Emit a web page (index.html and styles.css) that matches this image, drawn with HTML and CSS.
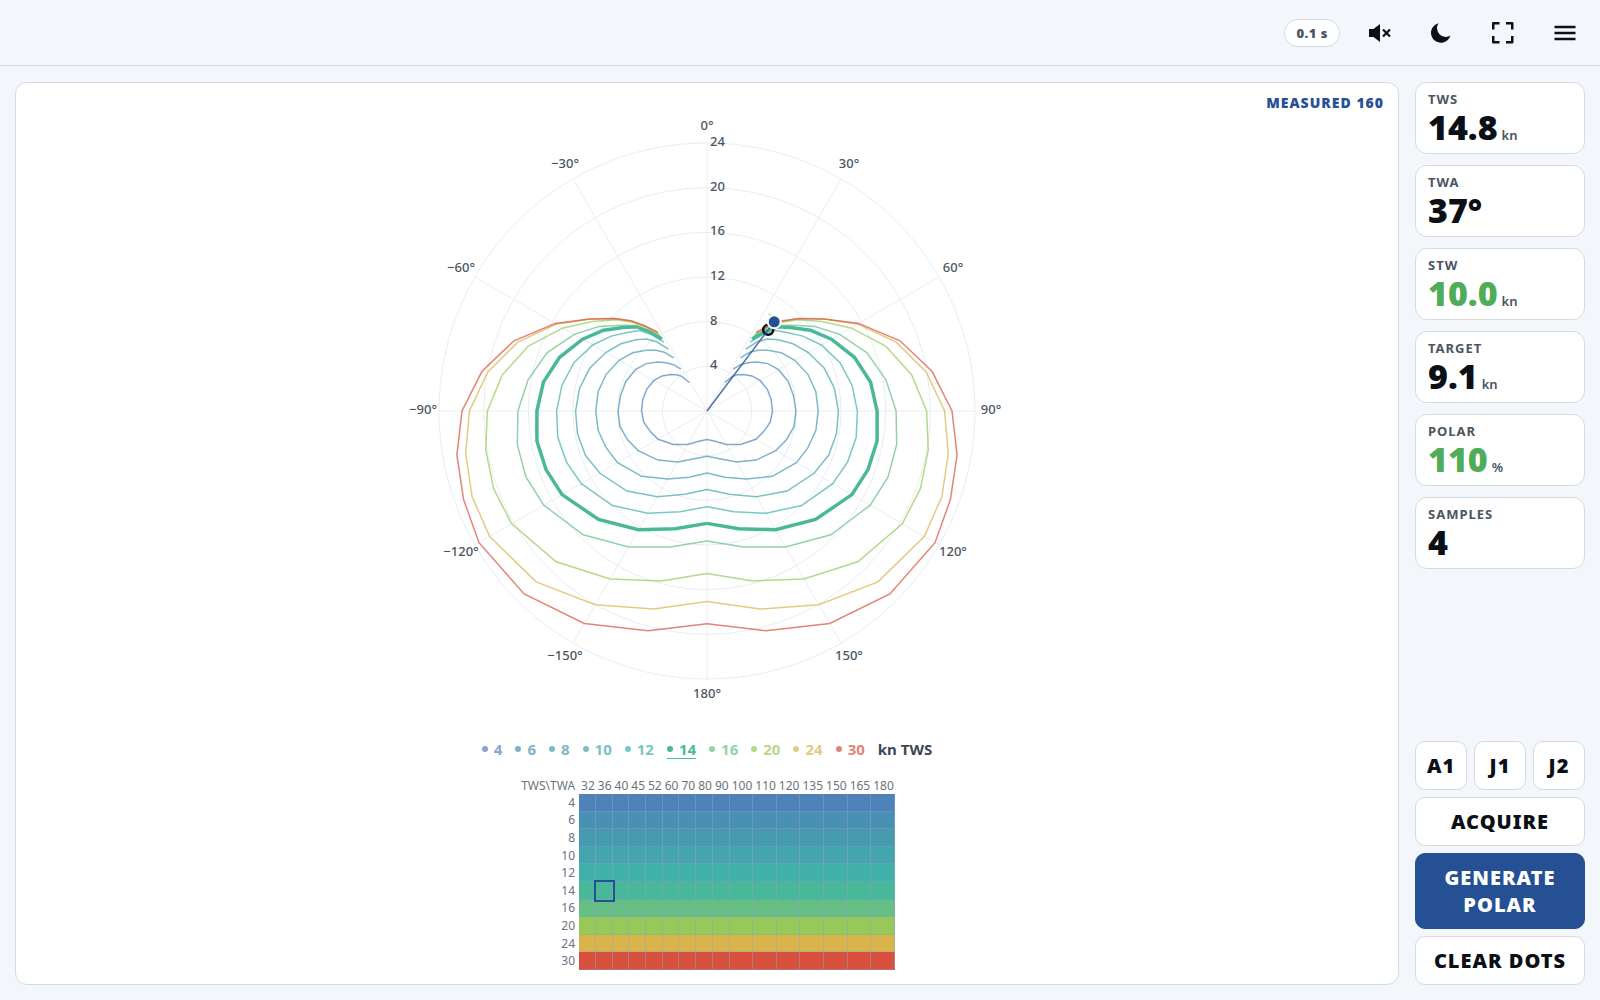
FILE: index.html
```
<!DOCTYPE html>
<html lang="en">
	<head>
		<meta charset="utf-8">
		<title>Polar</title>
		<link rel="stylesheet" href="styles.css">
	</head>
	<body>
		<header class="topbar">
			<span class="rate">0.1 s</span>
			<button class="icon-btn" type="button" aria-label="Sound off">
				<svg width="24" height="24" viewBox="0 0 24 24">
					<path fill="currentColor" d="M2 8h4.500l6.500-5v18l-6.500-5H2z"/>
					<path fill="none" stroke="currentColor" stroke-width="2.200" d="M16 8.500l7 7M23 8.500l-7 7"/>
				</svg>
			</button>
			<button class="icon-btn" type="button" aria-label="Night mode">
				<svg width="24" height="24" viewBox="0 0 24 24">
					<path fill="currentColor" d="M9.500 2.200A9.900 9.900 0 1 0 21.400 14.600A8.800 8.800 0 0 1 9.500 2.200z"/>
				</svg>
			</button>
			<button class="icon-btn" type="button" aria-label="Fullscreen">
				<svg width="24" height="24" viewBox="0 0 24 24">
					<path fill="none" stroke="currentColor" stroke-width="2.500" stroke-linejoin="round" d="M8.500 2.250H2.250V8.500M15 2.250h6.250V8.500M8.500 21.250H2.250V15M15 21.250h6.250V15"/>
				</svg>
			</button>
			<button class="icon-btn" type="button" aria-label="Menu">
				<svg width="24" height="24" viewBox="0 0 24 24">
					<path fill="none" stroke="currentColor" stroke-width="2.500" d="M1.500 6h21M1.500 12h21M1.500 18h21"/>
				</svg>
			</button>
		</header>

		<div class="layout">
			<main class="panel">
				<div class="measured">MEASURED 160</div>
				<svg class="polar" viewBox="-313 -313 626 626"></svg>
				<div class="legend"></div>
				<table class="heat">
					<thead><tr><th class="corner">TWS\TWA</th></tr></thead>
					<tbody></tbody>
				</table>
			</main>

			<aside class="side">
				<div class="stats">
					<div class="stat"><div class="label">TWS</div><div class="value">14.8<span class="unit">kn</span></div></div>
					<div class="stat"><div class="label">TWA</div><div class="value">37°</div></div>
					<div class="stat"><div class="label">STW</div><div class="value good">10.0<span class="unit">kn</span></div></div>
					<div class="stat"><div class="label">TARGET</div><div class="value">9.1<span class="unit">kn</span></div></div>
					<div class="stat"><div class="label">POLAR</div><div class="value good">110<span class="unit">%</span></div></div>
					<div class="stat"><div class="label">SAMPLES</div><div class="value">4</div></div>
				</div>
				<div class="actions">
					<div class="sails">
						<button class="btn" type="button">A1</button>
						<button class="btn" type="button">J1</button>
						<button class="btn" type="button">J2</button>
					</div>
					<button class="btn" type="button">ACQUIRE</button>
					<button class="btn primary" type="button">GENERATE POLAR</button>
					<button class="btn" type="button">CLEAR DOTS</button>
				</div>
			</aside>
		</div>

		<script src="polar.js"></script>
	</body>
</html>
```
FILE: styles.css
```
*{
	box-sizing: border-box;
	margin: 0;
	padding: 0;
}
body{
	display: flex;
	flex-direction: column;
	min-height: 100vh;
	background: #f3f6fa;
	color: #0b1016;
	font-family: "Noto Sans", "Open Sans", sans-serif;
}
button{
	font-family: inherit;
	color: inherit;
	cursor: pointer;
}

/* top bar */
.topbar{
	display: flex;
	align-items: center;
	justify-content: flex-end;
	gap: 16px;
	height: 66px;
	padding: 0 12px;
	border-bottom: 1px solid #d5dae2;
}
.rate{
	padding: 3px 11px;
	border: 1px solid #d5dae2;
	border-radius: 14px;
	background: #fff;
	color: #4a5563;
	font-size: 13px;
	font-weight: 900;
	line-height: 20px;
	letter-spacing: 0.5px;
}
.icon-btn{
	display: flex;
	align-items: center;
	justify-content: center;
	width: 46px;
	height: 46px;
	border: 0;
	background: none;
}

/* page */
.layout{
	flex: 1;
	display: grid;
	grid-template-columns: 1fr 170px;
	gap: 16px;
	padding: 16px 15px 15px;
}
.panel{
	position: relative;
	display: flex;
	flex-direction: column;
	align-items: center;
	padding: 15px 15px 0;
	border: 1px solid #d3dae4;
	border-radius: 12px;
	background: #fff;
}
.measured{
	position: absolute;
	top: 10px;
	right: 14px;
	color: #265094;
	font-size: 14px;
	font-weight: 900;
	line-height: 20px;
	letter-spacing: 1px;
}

/* polar chart */
.polar{
	width: 100%;
	height: 626px;
}
.grid{
	fill: none;
	stroke: #e9edf1;
	stroke-width: 1;
}
.tick{
	fill: #4a5563;
	font-size: 13px;
	font-weight: 500;
}
.curve{
	fill: none;
	stroke-width: 1.5;
	opacity: 0.7;
}
.curve.act{
	stroke-width: 3.5;
	opacity: 1;
}
.sample{
	fill: #9ed8c4;
}
.target{
	fill: none;
	stroke: #0b1016;
	stroke-width: 2.5;
}
.vector{
	stroke: #265094;
	stroke-width: 1.5;
	opacity: 0.8;
}
.live{
	fill: #265094;
	stroke: #fff;
	stroke-width: 2;
}

/* legend */
.legend{
	display: flex;
	gap: 13px;
	margin-top: 15px;
	font-size: 15px;
	font-weight: 700;
	line-height: 20px;
}
.legend span{
	display: flex;
	align-items: center;
	gap: 6px;
	height: 18px;
	margin-top: 1px;
	opacity: 0.7;
}
.legend span::before{
	content: "";
	width: 6px;
	height: 6px;
	border-radius: 50%;
	background: currentColor;
}
.legend span.act{
	box-shadow: 0 1px 0 currentColor;
	opacity: 1;
}
.legend b{
	color: #3c4757;
	font-weight: 700;
}

/* heat table */
.heat{
	height: 192px;
	margin-top: 19px;
	border-spacing: 0;
	color: #6b7280;
	font-size: 12px;
	line-height: 16px;
}
.heat th{
	padding: 0 1px 0 2px;
	font-weight: 400;
}
.heat .corner,.heat .row{
	padding-right: 4px;
	text-align: right;
}
.heat td{
	border-right: 1px solid rgba(140,165,195,0.5);
	border-bottom: 1px solid rgba(140,165,195,0.4);
}
.heat td.act{
	outline: 2px solid #265094;
}

/* side column */
.side{
	display: flex;
	flex-direction: column;
	justify-content: space-between;
}
.stats{
	display: grid;
	gap: 11px;
}
.stat{
	height: 72px;
	padding: 7px 12px;
	border: 1px solid #d5dae2;
	border-radius: 12px;
	background: #fff;
}
.label{
	color: #4a5563;
	font-size: 13px;
	font-weight: 700;
	line-height: 18px;
	letter-spacing: 1px;
}
.value{
	font-size: 34px;
	font-weight: 900;
	line-height: 38px;
}
.value.good{
	color: #4fac58;
}
.unit{
	margin-left: 4px;
	color: #4a5563;
	font-size: 13px;
	font-weight: 600;
}
.actions,.sails{
	display: grid;
	gap: 7px;
}
.sails{
	grid-template-columns: repeat(3,1fr);
}
.btn{
	padding: 10px 4px;
	border: 1px solid #d5dae2;
	border-radius: 10px;
	background: #fff;
	font-size: 20px;
	font-weight: 900;
	line-height: 27px;
	letter-spacing: 1px;
}
.btn.primary{
	border-color: #265094;
	background: #265094;
	color: #fff;
}
```
FILE: polar.js
```
var angles = [32,36,40,45,52,60,70,80,90,100,110,120,135,150,165,180],
	scale = 268 / 24, // px per knot
	active = 14;

// boat speed for each wind speed, one value per angle
var rows = [
	{tws: 4, color: "#4f82b8", speed: [3.01,3.83,4.24,4.62,5.1,5.48,5.74,5.84,5.87,5.75,5.4,5.06,4.24,3.45,2.8,2.56]},
	{tws: 6, color: "#4990b3", speed: [4.43,5.12,5.65,6.22,6.9,7.4,7.74,7.87,7.96,7.92,7.57,7.1,6.22,5.26,4.42,4.06]},
	{tws: 8, color: "#469bb0", speed: [5.62,6.5,7.11,7.7,8.46,9.08,9.61,9.9,9.96,9.9,9.62,9.24,8.27,7.03,6.15,5.55]},
	{tws: 10, color: "#44a5ac", speed: [6.53,7.66,8.42,9.02,9.78,10.48,11.18,11.59,11.77,11.78,11.59,11.1,10.14,8.86,7.72,7.03]},
	{tws: 12, color: "#41b0a9", speed: [7.26,8.47,9.4,9.97,10.89,11.82,12.68,13.19,13.47,13.57,13.39,13,11.97,10.58,9.34,8.58]},
	{tws: 14, color: "#48b899", speed: [7.61,8.8,9.85,10.58,11.75,12.86,14.05,14.88,15.23,15.47,15.34,14.98,13.74,12.27,10.92,10.07]},
	{tws: 16, color: "#65bf84", speed: [7.95,8.95,10,10.85,12.28,13.72,15.25,16.26,16.93,17.25,17.26,16.88,15.68,14.05,12.62,11.65]},
	{tws: 20, color: "#96c95a", speed: [8.15,9.25,10.38,11.55,13.02,14.89,17.02,18.61,19.67,20.12,20.34,20.2,19.1,17.36,15.75,14.55]},
	{tws: 24, color: "#d9b44b", speed: [8.25,9.35,10.5,11.7,13.35,15.58,18.03,19.94,21.28,21.94,22.39,22.47,21.65,20.03,18.37,17.05]},
	{tws: 30, color: "#d94f3d", speed: [8.3,9.41,10.54,11.72,13.38,15.69,18.39,20.46,21.94,22.74,23.2,23.58,23.16,21.97,20.37,19.05]}
];

var polar = document.querySelector(".polar"),
	legend = document.querySelector(".legend"),
	head = document.querySelector(".heat thead tr"),
	body = document.querySelector(".heat tbody");

// angle and speed to x,y (0 degrees is up)
function point(angle,speed){
	var a = angle * Math.PI / 180;
	return [(Math.sin(a) * speed * scale).toFixed(1),(-Math.cos(a) * speed * scale).toFixed(1)];
}

function add(parent,name,attrs,text){
	var svg = parent === polar,
		el = svg ? document.createElementNS("http://www.w3.org/2000/svg",name) : document.createElement(name);
	for(var key in attrs){
		el.setAttribute(key,attrs[key]);
	}
	if(text !== undefined){
		el.textContent = text;
	}
	parent.appendChild(el);
	return el;
}

// rings and spokes
for(var r = 4; r <= 24; r += 4){
	add(polar,"circle",{class: "grid", r: r * scale});
}
for(var a = -150; a <= 180; a += 30){
	var end = point(a,24),
		pos = point(a,284 / scale);
	add(polar,"line",{class: "grid", x2: end[0], y2: end[1]});
	add(polar,"text",{class: "tick", x: pos[0], y: +pos[1] + 3, "text-anchor": "middle"},(a < 0 ? "−" + -a : a) + "°");
}

// curves, port and starboard
rows.forEach(function (row){
	[-1,1].forEach(function (side){
		var pts = row.speed.map(function (speed,i){
			return point(angles[i] * side,speed).join(",");
		});
		add(polar,"polyline",{class: row.tws === active ? "curve act" : "curve", stroke: row.color, points: pts.join(" ")});
	});
});

for(var k = 4; k <= 24; k += 4){
	add(polar,"text",{class: "tick", x: 3, y: 3 - k * scale},k);
}

// live values
var sample = point(33,10.3),
	target = point(37,9.1),
	live = point(37,10);
add(polar,"circle",{class: "sample", cx: sample[0], cy: sample[1], r: 1});
add(polar,"circle",{class: "target", cx: target[0], cy: target[1], r: 5});
add(polar,"line",{class: "vector", x2: live[0], y2: live[1]});
add(polar,"circle",{class: "live", cx: live[0], cy: live[1], r: 6.5});

// legend and table
angles.forEach(function (angle){
	add(head,"th",{},angle);
});
rows.forEach(function (row){
	var item = add(legend,"span",row.tws === active ? {class: "act"} : {},row.tws),
		tr = add(body,"tr",{});
	item.style.color = row.color;
	add(tr,"th",{class: "row"},row.tws);
	angles.forEach(function (angle){
		var td = add(tr,"td",row.tws === active && angle === 36 ? {class: "act"} : {});
		td.style.backgroundColor = row.color;
	});
});
add(legend,"b",{},"kn TWS");
```
